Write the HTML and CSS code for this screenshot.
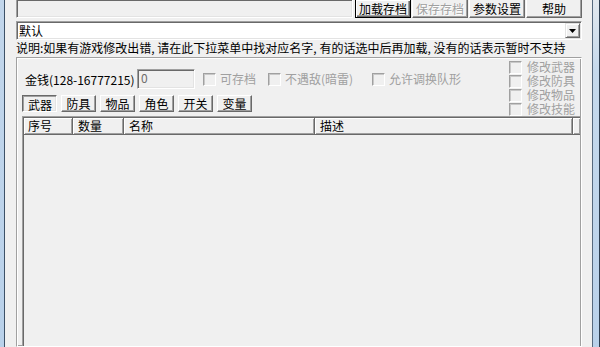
FILE: index.html
```html
<!DOCTYPE html>
<html lang="zh-CN">
<head>
<meta charset="utf-8">
<title>修改器</title>
<link rel="stylesheet" href="styles.css">
</head>
<body>
<div class="window">
  <div class="frame-left"></div>
  <div class="client">
    <div class="toolbar">
      <div class="path-edit"></div>
      <div class="btn btn-default">加载存档</div>
      <div class="btn disabled">保存存档</div>
      <div class="btn">参数设置</div>
      <div class="btn">帮助</div>
    </div>
    <div class="combo">
      <span class="combo-text">默认</span>
      <span class="combo-btn"><svg width="7" height="4" viewBox="0 0 7 4"><polygon points="0,0 7,0 3.5,4" fill="#000"/></svg></span>
    </div>
    <div class="hint">说明:如果有游戏修改出错, 请在此下拉菜单中找对应名字, 有的话选中后再加载, 没有的话表示暂时不支持</div>
    <div class="group">
      <div class="group-top">
        <div class="group-main">
          <div class="money-row">
            <span class="money-label">金钱(128-16777215)</span>
            <div class="edit">0</div>
            <div class="check w1"><span class="box"></span><span>可存档</span></div>
            <div class="check w2"><span class="box"></span><span>不遇敌(暗雷)</span></div>
            <div class="check"><span class="box"></span><span>允许调换队形</span></div>
          </div>
          <div class="tabs">
            <div class="tab pressed">武器</div>
            <div class="tab">防具</div>
            <div class="tab">物品</div>
            <div class="tab">角色</div>
            <div class="tab">开关</div>
            <div class="tab">变量</div>
          </div>
        </div>
        <div class="group-side">
          <div class="check side"><span class="box"></span><span>修改武器</span></div>
          <div class="check side"><span class="box"></span><span>修改防具</span></div>
          <div class="check side"><span class="box"></span><span>修改物品</span></div>
          <div class="check side"><span class="box"></span><span>修改技能</span></div>
        </div>
      </div>
      <div class="list">
        <div class="list-inner">
          <div class="list-header">
            <div class="hcell c1">序号</div>
            <div class="hcell c2">数量</div>
            <div class="hcell c3">名称</div>
            <div class="hcell c4">描述</div>
            <div class="hcell c5"></div>
          </div>
          <div class="list-body"></div>
        </div>
      </div>
    </div>
  </div>
  <div class="frame-right"></div>
</div>
</body>
</html>
```

FILE: styles.css
```css
* { box-sizing: border-box; }
html, body { margin: 0; padding: 0; }
body {
  width: 600px;
  height: 347px;
  overflow: hidden;
  font-family: "Noto Sans CJK SC", "Noto Sans", sans-serif;
  font-size: 12px;
  color: #000;
  background: #f0f0f0;
}
.window {
  display: flex;
  width: 600px;
  height: 347px;
  overflow: hidden;
}
.frame-left {
  flex: none;
  width: 5px;
  background: linear-gradient(#c2d6eb, #b9d1ea);
  border-right: 1px solid #3d5167;
}
.frame-right {
  flex: none;
  width: 8px;
  border-left: 1px solid #56697e;
  border-right: 1px solid #2d3e51;
  background: linear-gradient(#e2e8ee, #c6d9ec 70px, #b9d1ea);
}
.client {
  flex: 1;
  min-width: 0;
  background: #f0f0f0;
  padding: 0 10px 0 11px;
  display: flex;
  flex-direction: column;
  overflow: hidden;
}

/* top row */
.toolbar {
  flex: none;
  display: flex;
  gap: 1px;
  height: 19px;
  margin-top: -1px;
}
.path-edit {
  flex: 1;
  margin-right: 1px;
  background: #f0f0f0;
  border: 1px solid;
  border-color: #a0a0a0 #fff #fff #a0a0a0;
  box-shadow: inset 1px 1px #696969, inset -1px -1px #e3e3e3;
}
.btn {
  flex: none;
  width: 56px;
  display: flex;
  align-items: center;
  justify-content: center;
  line-height: 14px;
  background: #f0f0f0;
  border: 1px solid;
  border-color: #fff #696969 #696969 #fff;
  box-shadow: inset -1px -1px #a0a0a0;
}
.btn-default {
  border-color: #000;
  box-shadow: inset 1px 1px #fff, inset -1px -1px #696969, inset -2px -2px #a0a0a0;
}
.btn.disabled {
  color: #a0a0a0;
  text-shadow: 1px 1px #fff;
}

/* combo */
.combo {
  flex: none;
  margin-top: 3px;
  height: 19px;
  display: flex;
  align-items: center;
  background: #fff;
  border: 1px solid;
  border-color: #a0a0a0 #fff #fff #a0a0a0;
  box-shadow: inset 1px 1px #696969, inset -1px -1px #e3e3e3;
  padding: 1px;
}
.combo-text {
  flex: 1;
  line-height: 15px;
  padding-left: 1px;
}
.combo-btn {
  flex: none;
  width: 15px;
  height: 15px;
  display: flex;
  align-items: center;
  justify-content: center;
  background: #f0f0f0;
  border: 1px solid;
  border-color: #e3e3e3 #696969 #696969 #e3e3e3;
  box-shadow: inset 1px 1px #fff, inset -1px -1px #a0a0a0;
}

/* hint */
.hint {
  flex: none;
  height: 15px;
  line-height: 15px;
  white-space: nowrap;
}

/* group */
.group {
  flex: 1;
  min-height: 0;
  margin-top: 2px;
  display: flex;
  flex-direction: column;
  border: 1px solid;
  border-color: #a0a0a0 #fff #fff #a0a0a0;
  box-shadow: inset 1px 1px #fff, inset -1px -1px #a0a0a0;
  padding: 0 1px 0 5px;
}
.group-top {
  flex: none;
  display: flex;
  height: 58px;
}
.group-main {
  flex: 1;
  display: flex;
  flex-direction: column;
}
.money-row {
  display: flex;
  align-items: center;
  margin-top: 11px;
  height: 20px;
}
.money-label {
  flex: none;
  width: 115px;
  padding-left: 3px;
  white-space: nowrap;
}
.edit {
  flex: none;
  width: 58px;
  height: 20px;
  padding: 1px 0 0 3px;
  line-height: 13px;
  color: #6d6d6d;
  background: #f0f0f0;
  border: 1px solid;
  border-color: #a0a0a0 #fff #fff #a0a0a0;
  box-shadow: inset 1px 1px #696969, inset -1px -1px #e3e3e3;
  margin-right: 8px;
}
.check {
  display: flex;
  align-items: center;
  gap: 4px;
  color: #a0a0a0;
  white-space: nowrap;
  line-height: 14px;
}
.check.w1 { width: 65px; flex: none; }
.check.w2 { width: 104px; flex: none; }
.box {
  flex: none;
  width: 13px;
  height: 13px;
  background: #f0f0f0;
  border: 1px solid;
  border-color: #a0a0a0 #fff #fff #a0a0a0;
  box-shadow: inset 1px 1px #c8c8c8;
}
.tabs {
  display: flex;
  gap: 4px;
  margin-top: 6px;
  height: 17px;
}
.tab {
  flex: none;
  width: 35px;
  height: 17px;
  display: flex;
  align-items: center;
  justify-content: center;
  line-height: 13px;
  background: #f0f0f0;
  border: 1px solid;
  border-color: #fff #696969 #696969 #fff;
  box-shadow: inset -1px -1px #a0a0a0;
}
.tab.pressed {
  border-color: #696969 #fff #fff #696969;
  box-shadow: inset 1px 1px #a0a0a0, inset -1px -1px #e3e3e3;
  padding: 1px 0 0 1px;
}
.group-side {
  flex: none;
  width: 71px;
  padding-top: 2px;
  display: flex;
  flex-direction: column;
}
.check.side {
  height: 14px;
  gap: 5px;
  line-height: 12px;
}

/* list view */
.list {
  flex: 1;
  min-height: 0;
  border-top: 1px solid #a0a0a0;
  border-left: 1px solid #a0a0a0;
  overflow: hidden;
}
.list-inner {
  height: 100%;
  border-top: 1px solid #696969;
  border-left: 1px solid #696969;
  background: #f0f0f0;
  display: flex;
  flex-direction: column;
}
.list-header {
  flex: none;
  display: flex;
  height: 17px;
}
.hcell {
  flex: none;
  height: 17px;
  padding-left: 5px;
  line-height: 15px;
  white-space: nowrap;
  background: #f0f0f0;
  border-right: 1px solid #696969;
  border-bottom: 1px solid #696969;
  box-shadow: inset 1px 1px #fff, inset -1px -1px #a0a0a0;
}
.hcell.c1 { width: 49px; padding-left: 4px; }
.hcell.c2 { width: 51px; }
.hcell.c3 { width: 191px; }
.hcell.c4 { width: 258px; }
.hcell.c5 { flex: 1; border-right: none; }
.list-body {
  flex: 1;
  background: #f0f0f0;
}
```
